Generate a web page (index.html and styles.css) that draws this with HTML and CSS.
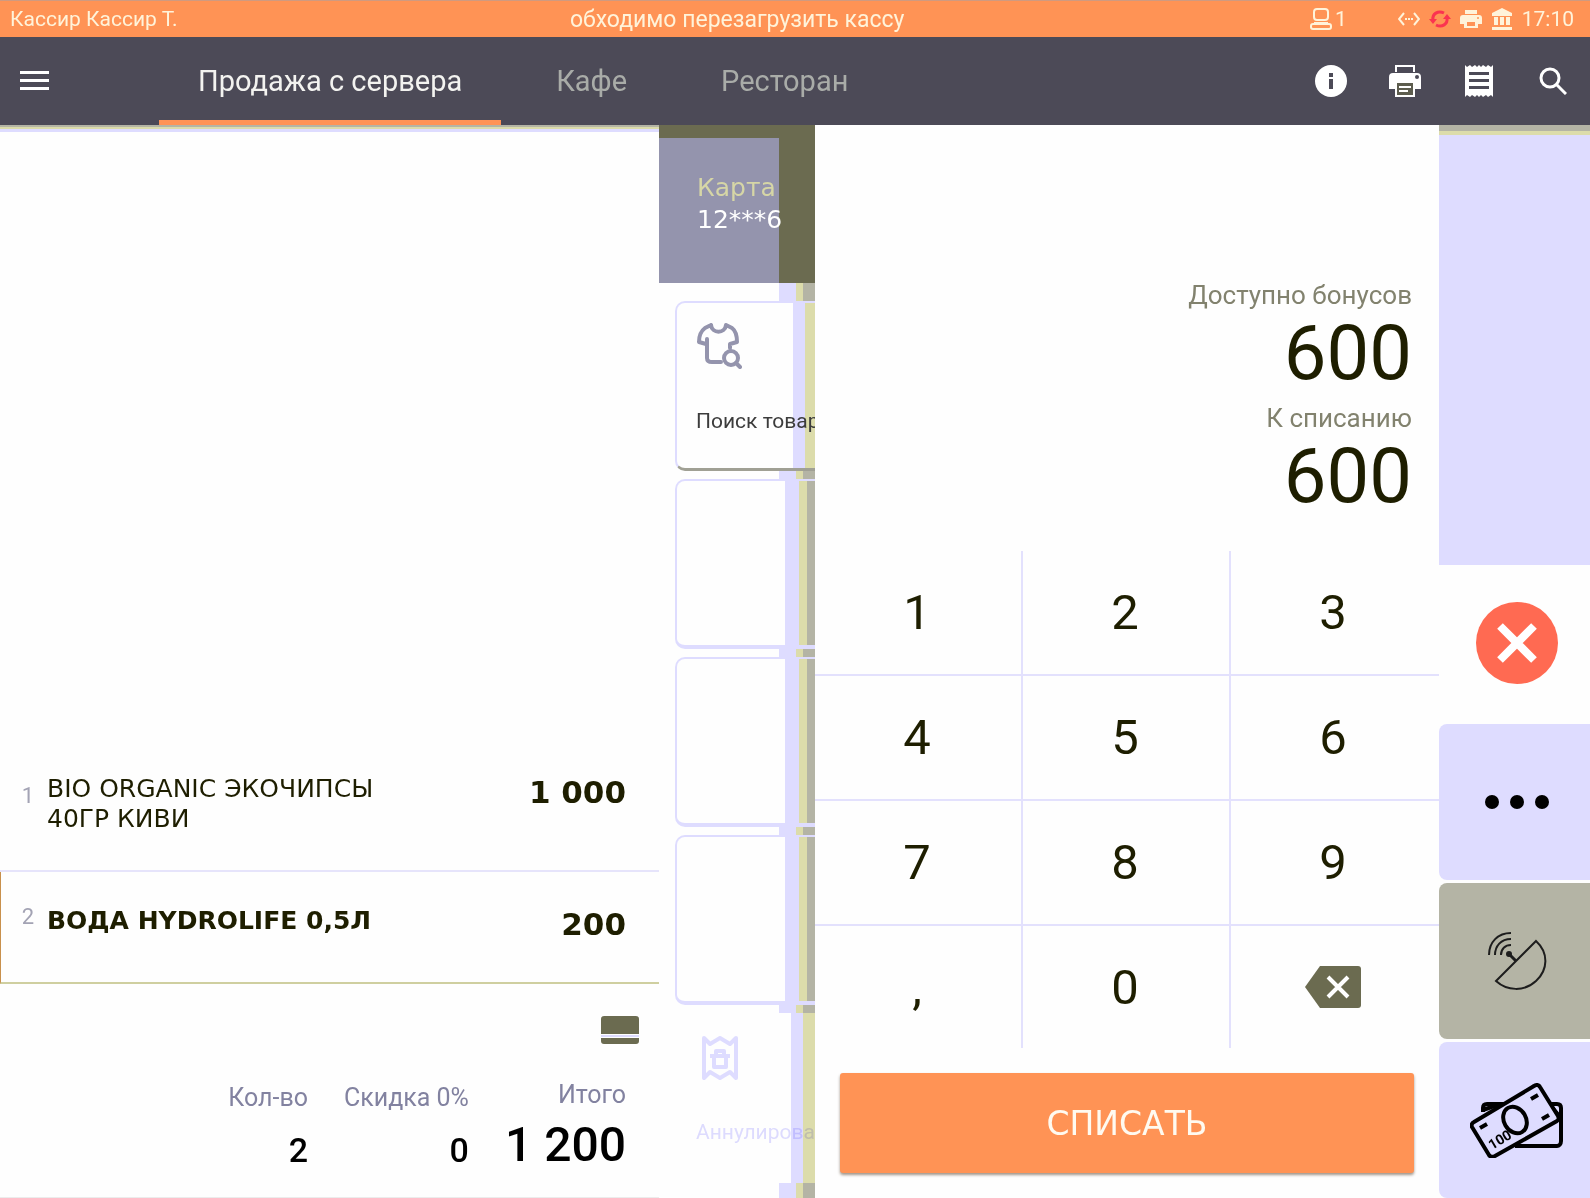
FILE: index.html
```html
<!DOCTYPE html>
<html lang="ru">
<head>
    <meta charset="UTF-8">
    <meta name="viewport" content="width=device-width, initial-scale=1.0">
    <title>Касса</title>
    <link rel="stylesheet" href="styles.css">
</head>
<body>
    <div class="status-bar">
        <span class="cashier">Кассир Кассир Т.</span>
        <span class="notice">обходимо перезагрузить кассу</span>
        <div class="status-icons">
            <span class="terminal">
                <svg width="22" height="22" viewBox="0 0 22 22" fill="none" stroke="#fff3da" stroke-width="2">
                    <rect x="4" y="1" width="14" height="11" rx="3"/>
                    <path d="M4 14h14v2H4z" fill="#fff3da" stroke="none"/>
                    <rect x="1" y="16" width="20" height="5" rx="2"/>
                </svg>
                1
            </span>
            <svg width="22" height="22" viewBox="0 0 22 22" fill="none" stroke="#fff3da" stroke-width="2">
                <path d="M6 5L1 11l5 6M16 5l5 6-5 6"/>
                <path d="M7 10h2v2H7zM10 10h2v2h-2zM13 10h2v2h-2z" fill="#fff3da" stroke="none"/>
            </svg>
            <svg width="22" height="22" viewBox="0 0 22 22" fill="none" stroke="#fb3350" stroke-width="3">
                <path d="M4 12c-1-6 5-10 11-7M18 10c1 6-5 10-11 7"/>
                <path d="M0 11h8l-4 5zM14 11h8l-4-5z" fill="#fb3350" stroke="none"/>
            </svg>
            <svg width="22" height="22" viewBox="0 0 22 22" fill="#fff3da">
                <path d="M5 2h12v4H5zM3 7h16a3 3 0 0 1 3 3v6h-4v-4H4v4H0v-6a3 3 0 0 1 3-3z"/>
                <path d="M4 12h14v8H4zM7 14v4h8v-4z" fill-rule="evenodd"/>
                <circle cx="18" cy="10" r="1" fill="#ff9355"/>
            </svg>
            <svg width="22" height="22" viewBox="0 0 22 22" fill="#fff3da">
                <path d="M11 0l10 5v3H1V5zM3 9h4v8H3zM9 9h4v8H9zM15 9h4v8h-4zM1 19h20v3H1z"/>
            </svg>
            <span class="clock">17:10</span>
        </div>
    </div>

    <header class="app-bar">
        <button class="icon-button menu" aria-label="Меню">
            <svg width="29" height="20" viewBox="0 0 29 20" fill="#fff">
                <path d="M0 0h29v3H0zM0 8h29v3H0zM0 16h29v3H0z"/>
            </svg>
        </button>
        <nav class="tabs">
            <a class="active" href="#server">Продажа с сервера</a>
            <a href="#cafe">Кафе</a>
            <a href="#restaurant">Ресторан</a>
        </nav>
        <div class="actions">
            <button class="icon-button" aria-label="Информация">
                <svg width="32" height="32" viewBox="0 0 32 32">
                    <circle cx="16" cy="16" r="16" fill="#fff"/>
                    <path d="M14 8h4v4h-4zM14 14h4v10h-4z" fill="#4c4a57"/>
                </svg>
            </button>
            <button class="icon-button" aria-label="Печать">
                <svg width="32" height="32" viewBox="0 0 32 32">
                    <path d="M7 7V1h18v6" fill="none" stroke="#fff" stroke-width="2"/>
                    <path d="M4 8h24a4 4 0 0 1 4 4v12h-6v8H6v-8H0V12a4 4 0 0 1 4-4z" fill="#fff"/>
                    <path d="M8 18h16v12H8z" fill="#5d5d4e"/>
                    <path d="M10 21h12v2H10zM10 25h9v2h-9z" fill="#fff"/>
                    <circle cx="28" cy="12" r="2" fill="#4c4a57"/>
                </svg>
            </button>
            <button class="icon-button" aria-label="Чеки">
                <svg width="30" height="32" viewBox="0 0 30 32">
                    <path d="M1 0l2 2 3-2 2 2 3-2 2 2 2-2 2 2 2-2 3 2 2-2 3 2 2-2v32l-2-2-3 2-2-2-3 2-2-2-2 2-2-2-2 2-3-2-2 2-3-2-2 2z" fill="#fff"/>
                    <path d="M5 7h20v3H5zM5 14h20v3H5zM5 21h20v3H5z" fill="#4c4a57"/>
                </svg>
            </button>
            <button class="icon-button" aria-label="Поиск">
                <svg width="28" height="28" viewBox="0 0 28 28" fill="none" stroke="#fff">
                    <circle cx="11" cy="11" r="9" stroke-width="3"/>
                    <path d="M17 17l10 10" stroke-width="3"/>
                </svg>
            </button>
        </div>
    </header>

    <main class="workspace">
        <section class="receipt">
            <ol class="items">
                <li class="item">
                    <span class="number">1</span>
                    <span class="name">BIO ORGANIC ЭКОЧИПСЫ<br>40ГР КИВИ</span>
                    <span class="price">1 000</span>
                </li>
                <li class="item selected">
                    <span class="number">2</span>
                    <span class="name">ВОДА HYDROLIFE 0,5Л</span>
                    <span class="price">200</span>
                </li>
            </ol>
            <div class="summary">
                <svg class="card-icon" width="38" height="28" viewBox="0 0 38 28" fill="#6b6b50">
                    <path d="M3 0h32a3 3 0 0 1 3 3v15H0V3a3 3 0 0 1 3-3zM0 22h38v3a3 3 0 0 1-3 3H3a3 3 0 0 1-3-3z"/>
                    <path d="M0 19h38v2H0z" fill="#dedcff"/>
                </svg>
                <dl class="totals">
                    <div>
                        <dt>Кол-во</dt>
                        <dd>2</dd>
                    </div>
                    <div>
                        <dt>Скидка 0%</dt>
                        <dd>0</dd>
                    </div>
                    <div class="grand">
                        <dt>Итого</dt>
                        <dd>1 200</dd>
                    </div>
                </dl>
            </div>
        </section>

        <section class="functions">
            <div class="customer">
                <div class="customer-card">
                    <div>Карта</div>
                    <strong>12***6</strong>
                </div>
            </div>
            <div class="tiles">
                <button class="tile search">
                    <svg width="46" height="46" viewBox="0 0 46 46" fill="none" stroke="#9494ad" stroke-width="4" stroke-linecap="round" stroke-linejoin="round">
                        <path d="M15 2L9 5C5 8 3 13 3 19l7 2M15 2c1 9 14 9 15 0l6 3c4 3 5 8 5 14l-7 2v4M11 16v19c0 3 2 4 5 4h9"/>
                        <circle cx="35" cy="35" r="7"/>
                        <path d="M40 40l4 4"/>
                    </svg>
                    <span>Поиск товара</span>
                </button>
                <button class="tile empty" aria-label="Пусто"></button>
                <button class="tile empty" aria-label="Пусто"></button>
                <button class="tile empty" aria-label="Пусто"></button>
                <button class="tile void">
                    <svg width="46" height="46" viewBox="0 0 46 46" fill="none" stroke="#dedcff" stroke-width="4" stroke-linejoin="round">
                        <path d="M8 3l6 6 10-6 10 6 6-6v40l-6-6-10 6-10-6-6 6z"/>
                        <path d="M14 21h20M18 22v10h12V22M20 20v-4h8v4"/>
                    </svg>
                    <span>Аннулировать</span>
                </button>
            </div>
        </section>

        <section class="bonus">
            <dl class="balance">
                <dt>Доступно бонусов</dt>
                <dd>600</dd>
                <dt>К списанию</dt>
                <dd>600</dd>
            </dl>
            <div class="keypad">
                <button>1</button>
                <button>2</button>
                <button>3</button>
                <button>4</button>
                <button>5</button>
                <button>6</button>
                <button>7</button>
                <button>8</button>
                <button>9</button>
                <button>,</button>
                <button>0</button>
                <button aria-label="Удалить">
                    <svg width="56" height="42" viewBox="0 0 56 42">
                        <path d="M15 0h38a3 3 0 0 1 3 3v36a3 3 0 0 1-3 3H15L0 21z" fill="#6b6b50"/>
                        <path d="M23 11l20 20M43 11L23 31" stroke="#fff" stroke-width="4"/>
                    </svg>
                </button>
            </div>
            <button class="submit">СПИСАТЬ</button>
        </section>

        <aside class="side">
            <div class="side-space"></div>
            <button class="side-button cancel" aria-label="Отмена">
                <svg width="82" height="82" viewBox="0 0 82 82">
                    <circle cx="41" cy="41" r="41" fill="#ff6a52"/>
                    <path d="M24 24l34 34M58 24L24 58" stroke="#fff" stroke-width="8"/>
                </svg>
            </button>
            <button class="side-button" aria-label="Ещё">
                <svg width="64" height="14" viewBox="0 0 64 14">
                    <circle cx="7" cy="7" r="7"/>
                    <circle cx="32" cy="7" r="7"/>
                    <circle cx="57" cy="7" r="7"/>
                </svg>
            </button>
            <button class="side-button offline" aria-label="Связь">
                <svg width="60" height="60" viewBox="0 0 60 60" fill="none" stroke="#1d1d1d" stroke-width="2">
                    <path d="M49 10L9 50c11 10 28 11 40 0s13-28 0-40z"/>
                    <path d="M29 30l-7-7" stroke-width="3"/>
                    <circle cx="22" cy="23" r="2" fill="#1d1d1d"/>
                    <path d="M2 24C2 11 11 2 24 2M8 24c0-9 6-16 16-16M14 24c0-6 4-10 10-10"/>
                </svg>
            </button>
            <button class="side-button" aria-label="Наличные">
                <svg width="94" height="76" viewBox="0 0 94 76" fill="none" stroke="#000" stroke-width="4" stroke-linejoin="round">
                    <path d="M13 30v-4c0-3 2-4 4-4h70c3 0 4 2 4 4v33c0 3-2 5-4 5H45"/>
                    <path d="M13 28l14-5M80 23l11 13"/>
                    <path d="M4 40L64 4c2-2 5-1 6 1l18 29c1 2 1 4-1 5L25 74c-2 1-5 1-6-1L2 45c-1-2 0-4 2-5z" fill="#dedcff"/>
                    <ellipse cx="45" cy="38" rx="11" ry="14" transform="rotate(-30 45 38)"/>
                    <path d="M10 46l7-4M61 17l7-4M72 37l7-4"/>
                    <text x="22" y="68" transform="rotate(-31 22 68)" class="bill-text">100</text>
                </svg>
            </button>
        </aside>
    </main>
</body>
</html>
```

FILE: styles.css
```css
* {
    box-sizing: border-box;
}
body {
    margin: 0;
    min-height: 100vh;
    display: flex;
    flex-direction: column;
    font-family: Roboto, "Liberation Sans", sans-serif;
    background-color: #fefefe;
    color: #1e1e00;
}
button {
    border: 0;
    padding: 0;
    background: none;
    font: inherit;
    color: inherit;
    cursor: pointer;
}
svg {
    display: block;
    flex: none;
}
dl, dd, ol {
    margin: 0;
    padding: 0;
}

/* Status bar */
.status-bar {
    display: flex;
    align-items: center;
    height: 37px;
    padding: 0 16px 0 10px;
    background-color: #ff9355;
    border-top: 1px solid #d09a80;
    color: #fff3da;
    font-size: 21px;
}
.cashier {
    flex: 0 0 560px;
}
.notice {
    font-size: 23px;
    white-space: nowrap;
}
.status-icons {
    display: flex;
    align-items: center;
    gap: 9px;
    margin-left: auto;
}
.terminal {
    display: flex;
    align-items: center;
    gap: 3px;
    margin-right: 42px;
}

/* App bar with tabs */
.app-bar {
    display: flex;
    height: 88px;
    background-color: #4c4a57;
}
.icon-button {
    display: flex;
    align-items: center;
    justify-content: center;
}
.menu {
    width: 69px;
    margin-right: 90px;
}
.tabs {
    display: flex;
    gap: 16px;
}
.tabs a {
    display: flex;
    align-items: center;
    padding: 4px 39px 0;
    border-bottom: 5px solid transparent;
    color: #a9aca8;
    font-size: 29px;
    text-decoration: none;
    white-space: nowrap;
}
.tabs a.active {
    border-color: #ff9355;
    color: #f3f3f0;
}
.actions {
    display: flex;
    margin-left: auto;
}
.actions .icon-button {
    width: 74px;
}

.workspace {
    flex: 1;
    display: grid;
    grid-template-columns: 659fr 156fr 624fr 151fr;
}

/* Receipt */
.receipt {
    display: flex;
    flex-direction: column;
    border-top: 2px solid #b4b4a5;
    box-shadow: inset 0 2px #dcdcab, inset 0 5px #dedcff;
}
.items {
    flex: 1;
    display: flex;
    flex-direction: column;
    justify-content: flex-end;
    list-style: none;
    font-family: "DejaVu Sans", sans-serif;
}
.item {
    display: grid;
    grid-template-columns: 46px 1fr auto;
    align-items: start;
    height: 112px;
    padding: 14px 33px 0 1px;
    border-bottom: 2px solid #e6e4fb;
}
.number {
    padding: 7px 13px 0 0;
    color: #a3a3b4;
    font-family: Roboto, sans-serif;
    font-size: 22px;
    line-height: 30px;
    text-align: right;
}
.name {
    font-size: 25px;
    line-height: 30px;
}
.price {
    font-size: 31px;
    font-weight: bold;
    line-height: 36px;
}
.item.selected {
    padding-top: 30px;
    padding-left: 0;
    border-left: 1px solid #c8904c;
    border-bottom-color: #cfcfa0;
}
.selected .name {
    padding-top: 4px;
    font-weight: bold;
}
.selected .number {
    padding-top: 0;
}
.selected .price {
    padding-top: 4px;
}
.summary {
    height: 214px;
    padding: 32px 33px 0;
    border-bottom: 1px solid #ececec;
}
.card-icon {
    margin: 0 -13px 0 auto;
}
.totals {
    display: flex;
    justify-content: flex-end;
    gap: 36px;
    margin-top: 36px;
    text-align: right;
    white-space: nowrap;
}
.totals dt {
    color: #8282a0;
    font-size: 25px;
    line-height: 36px;
}
.totals dd {
    color: #000;
    font-size: 34px;
    font-weight: 500;
    line-height: 68px;
}
.totals .grand dt {
    line-height: 30px;
}
.totals .grand dd {
    font-size: 48px;
    line-height: 70px;
}

/* Functions, covered on the right by the shade of the bonus panel */
.functions {
    display: flex;
    flex-direction: column;
    overflow: hidden;
}
.customer {
    height: 158px;
    padding-top: 13px;
    background-color: #6b6b50;
}
.customer-card {
    width: 120px;
    height: 145px;
    padding: 34px 0 0 38px;
    background-color: #9494ad;
    color: #fff;
    font-family: "DejaVu Sans", sans-serif;
    font-size: 25px;
    line-height: 32px;
    white-space: nowrap;
}
.customer-card div {
    color: #d6d6a6;
}
.customer-card strong {
    font-weight: normal;
}
.tiles {
    flex: 1;
    display: flex;
    flex-direction: column;
    gap: 8px;
    padding: 18px 0 0 16px;
    background: linear-gradient(to right, #fefefe 120px, #dedcff 120px 137px, #dcdcab 137px 144px, #b4b4a5 144px);
}
.tile {
    height: 170px;
    border: 2px solid #dedcff;
    border-width: 2px 0 4px 2px;
    border-radius: 10px 0 0 10px;
    text-align: left;
}
.tile.empty {
    background: linear-gradient(to right, #fefefe 108px, #dedcff 108px 122px, #dcdcab 122px 130px, #b4b4a5 130px);
}
.tile.search,
.tile.void {
    display: flex;
    flex-direction: column;
    justify-content: space-between;
    padding: 20px 0 34px 19px;
    background: linear-gradient(to right, #fefefe 116px, #dedcff 116px 128px, #dcdcab 128px);
    font-size: 21px;
    line-height: 26px;
    white-space: nowrap;
}
.tile.search {
    border-bottom: 3px solid #a0a094;
    color: #3c3c3c;
}
.tile.void {
    border-color: transparent;
    border-left: 0;
    border-radius: 0;
    padding-left: 21px;
    background-origin: border-box;
}
.tile.void span {
    color: #dedcff;
    mix-blend-mode: multiply;
}

/* Bonus panel */
.bonus {
    display: flex;
    flex-direction: column;
    justify-content: flex-end;
    background-color: #fefefe;
}
.balance {
    padding: 0 27px 32px;
    text-align: right;
}
.balance dt {
    color: #82826e;
    font-size: 26px;
    line-height: 30px;
}
.balance dd {
    font-size: 76px;
    line-height: 86px;
}
.balance dd + dt {
    margin-top: 7px;
}
.keypad {
    display: grid;
    grid-template-columns: repeat(3, 1fr);
}
.keypad button {
    display: flex;
    align-items: center;
    justify-content: center;
    height: 125px;
    padding-right: 2px;
    border-right: 2px solid #e3e1fd;
    border-bottom: 2px solid #e3e1fd;
    font-size: 49px;
}
.keypad button:nth-child(3n) {
    padding-right: 4px;
    border-right: 0;
}
.keypad button:nth-child(n+10) {
    height: 122px;
    border-bottom: 0;
}
.submit {
    height: 100px;
    margin: 25px;
    background-color: #ff9355;
    border-radius: 3px;
    box-shadow: 0 2px 3px #a09488;
    color: #fffaf0;
    font-family: "DejaVu Sans", sans-serif;
    font-size: 33px;
}

/* Right column */
.side {
    display: flex;
    flex-direction: column;
    gap: 3px;
}
.side-space {
    flex: 1;
    margin-bottom: -3px;
    border-top: 6px solid #b4b4a5;
    background-color: #dedcff;
    box-shadow: inset 0 4px #dcdcab;
}
.side-button {
    display: flex;
    align-items: center;
    justify-content: center;
    height: 156px;
    padding-left: 4px;
    border-radius: 8px 0 0 8px;
    background-color: #dedcff;
}
.side-button.cancel {
    background-color: #fefefe;
}
.side-button.offline {
    background-color: #b4b4a5;
}
.bill-text {
    fill: #000;
    stroke: none;
    font-size: 14px;
    font-weight: bold;
}
```
